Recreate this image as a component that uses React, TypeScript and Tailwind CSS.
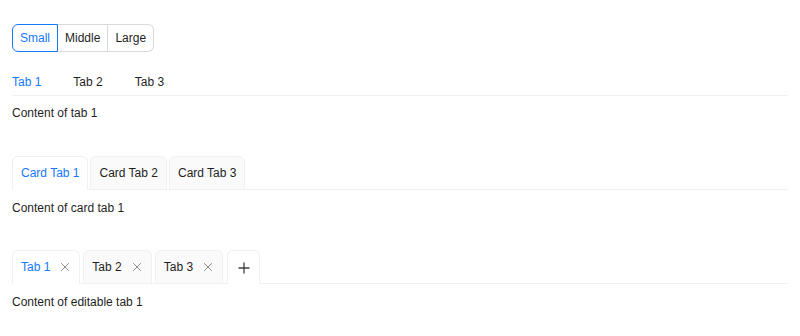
import React from "react";

const X = () => (
  <svg width="12" height="12" viewBox="0 0 12 12" className="text-[#8c8c8c]">
    <path d="M2.2 2.2 L9.8 9.8 M9.8 2.2 L2.2 9.8" stroke="currentColor" strokeWidth="1" />
  </svg>
);

const Plus = () => (
  <svg width="14" height="14" viewBox="0 0 14 14" className="text-[#3f3f3f]">
    <path d="M7 1.5 V12.5 M1.5 7 H12.5" stroke="currentColor" strokeWidth="1.3" />
  </svg>
);

export default function App() {
  return (
    <div
      className="px-3 pt-6 text-xs text-[#1f1f1f] bg-white min-h-[336px]"
      style={{ fontFamily: '"Liberation Sans", Arial, sans-serif' }}
    >
      {/* Segmented */}
      <div className="flex">
        <div className="relative z-10 flex h-7 items-center rounded-l-md border border-[#1677ff] px-[7px] text-[#1677ff]">Small</div>
        <div className="flex h-7 items-center border-y border-r border-[#d9d9d9] px-[7px]">Middle</div>
        <div className="flex h-7 items-center rounded-r-md border-y border-r border-[#d9d9d9] px-[7px]">Large</div>
      </div>

      {/* Line tabs */}
      <div className="mt-4 flex h-[28px] items-center gap-8 border-b border-[#f0f0f0]">
        <div className="text-[#1677ff]">Tab 1</div>
        <div>Tab 2</div>
        <div>Tab 3</div>
      </div>
      <div className="mt-2 leading-[18px]">Content of tab 1</div>

      {/* Card tabs */}
      <div className="mt-[34px] flex gap-[2px] border-b border-[#f0f0f0]">
        <div className="-mb-px flex h-[34px] items-center rounded-t-md border border-[#f0f0f0] border-b-white bg-white px-2 text-[#1677ff]">Card Tab 1</div>
        <div className="-mb-px flex h-[34px] items-center rounded-t-md border border-[#f0f0f0] bg-[#fafafa] px-2">Card Tab 2</div>
        <div className="-mb-px flex h-[34px] items-center rounded-t-md border border-[#f0f0f0] bg-[#fafafa] px-2">Card Tab 3</div>
      </div>
      <div className="mt-[9px] leading-[18px]">Content of card tab 1</div>

      {/* Editable tabs */}
      <div className="mt-[33px] flex gap-[3px] border-b border-[#f0f0f0]">
        <div className="-mb-px flex h-[34px] items-center rounded-t-md border border-[#f0f0f0] border-b-white bg-white pl-2 pr-[8px] text-[#1677ff]">
          Tab 1<span className="ml-[9px] flex"><X /></span>
        </div>
        <div className="-mb-px flex h-[34px] items-center rounded-t-md border border-[#f0f0f0] bg-[#fafafa] pl-2 pr-[8px]">
          Tab 2<span className="ml-[9px] flex"><X /></span>
        </div>
        <div className="-mb-px flex h-[34px] items-center rounded-t-md border border-[#f0f0f0] bg-[#fafafa] pl-2 pr-[8px]">
          Tab 3<span className="ml-[9px] flex"><X /></span>
        </div>
        <div className="-mb-px ml-px flex h-[34px] w-[33px] items-center justify-center rounded-t-md border border-[#f0f0f0] border-b-0 bg-white">
          <Plus />
        </div>
      </div>
      <div className="mt-[9px] leading-[18px]">Content of editable tab 1</div>
    </div>
  );
}
